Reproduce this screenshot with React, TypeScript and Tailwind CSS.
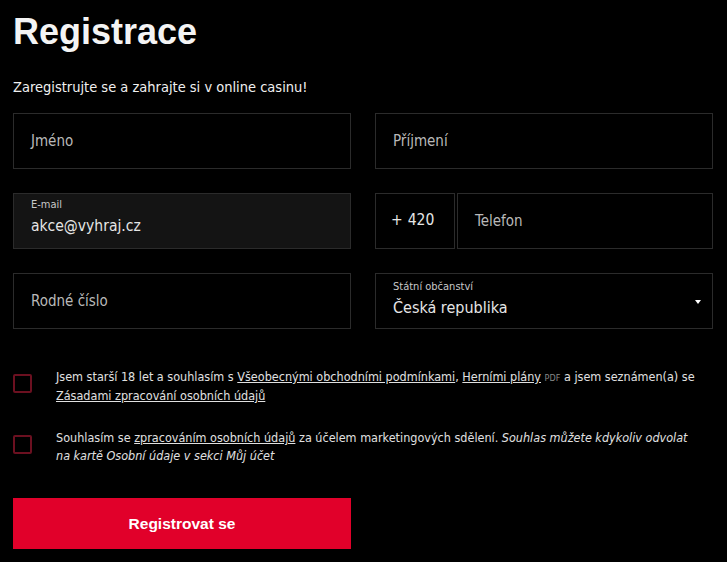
import React from "react";

const font = { fontFamily: '"Liberation Sans Narrow", "DejaVu Sans Condensed", "Liberation Sans", sans-serif' };

function Field({ children, className = "" }: { children: React.ReactNode; className?: string }) {
  return (
    <div className={`h-[56px] border border-[#2b2b2b] flex flex-col justify-center px-[17px] ${className}`}>
      {children}
    </div>
  );
}

export default function App() {
  return (
    <div className="w-[727px] h-[562px] bg-black text-white overflow-hidden pl-[13px]" style={font}>
      <h1 className="pt-[10px] text-[36px] leading-[44px] font-bold text-[#f4f4f4]" style={{ fontFamily: '"Liberation Sans", sans-serif' }}>
        Registrace
      </h1>
      <p className="mt-[24px] text-[14.5px] leading-[18px] text-[#f0f0f0]">Zaregistrujte se a zahrajte si v online casinu!</p>

      <div className="mt-[17px] grid grid-cols-[338px_338px] gap-x-[24px] gap-y-[24px]">
        <Field>
          <span className="text-[15px] text-[#b9b9b9]">Jméno</span>
        </Field>
        <Field>
          <span className="text-[15px] text-[#b9b9b9]">Příjmení</span>
        </Field>
        <Field className="bg-[#141414] border-[#1e1e1e]">
          <span className="text-[11px] leading-[14px] text-[#c8c8c8] -mt-[8px]">E-mail</span>
          <span className="text-[15.5px] leading-[20px] text-[#e6e6e6] mt-[4px]">akce@vyhraj.cz</span>
        </Field>
        <div className="flex h-[56px] gap-[2px]">
          <div className="w-[80px] border border-[#2b2b2b] flex items-center pl-[15px] text-[15.5px] text-[#e6e6e6]">
            <span className="mr-[5px]">+</span>420
          </div>
          <div className="flex-1 border border-[#2b2b2b] flex items-center pl-[17px] text-[15px] text-[#b9b9b9]">Telefon</div>
        </div>
        <Field>
          <span className="text-[15px] text-[#b9b9b9]">Rodné číslo</span>
        </Field>
        <Field className="relative">
          <span className="text-[11px] leading-[14px] text-[#c8c8c8] -mt-[4px]">Státní občanství</span>
          <span className="text-[16px] leading-[20px] text-[#e6e6e6] mt-[4px]">Česká republika</span>
          <svg className="absolute right-[11px] top-[26px]" width="6" height="4" viewBox="0 0 6 4">
            <path d="M0 0 L6 0 L3 4 Z" fill="#ffffff" />
          </svg>
        </Field>
      </div>

      <div className="mt-[38px] flex flex-col gap-[23px] w-[690px]">
        <div className="flex items-start">
          <div className="mt-[7px] w-[19px] h-[19px] border-2 border-[#6b1020] rounded-[2px] shrink-0" />
          <p className="ml-[24px] mt-[1px] text-[12.5px] leading-[18px] text-[#e0e0e0]">
            Jsem starší 18 let a souhlasím s <span className="underline">Všeobecnými obchodními podmínkami</span>,{" "}
            <span className="underline">Herními plány</span> <span className="text-[9px] text-[#888]">PDF</span> a jsem seznámen(a) se{" "}
            <span className="underline">Zásadami zpracování osobních údajů</span>
          </p>
        </div>
        <div className="flex items-start">
          <div className="mt-[7px] w-[19px] h-[19px] border-2 border-[#6b1020] rounded-[2px] shrink-0" />
          <p className="ml-[24px] mt-[1px] text-[12.5px] leading-[18px] text-[#e0e0e0]">
            Souhlasím se <span className="underline">zpracováním osobních údajů</span> za účelem marketingových sdělení.{" "}
            <i>Souhlas můžete kdykoliv odvolat na kartě Osobní údaje v sekci Můj účet</i>
          </p>
        </div>
      </div>

      <button className="mt-[33px] w-[338px] h-[51px] bg-[#e1002a] text-white text-[15.5px] font-bold" style={{ fontFamily: '"Liberation Sans", sans-serif' }}>
        Registrovat se
      </button>
    </div>
  );
}
